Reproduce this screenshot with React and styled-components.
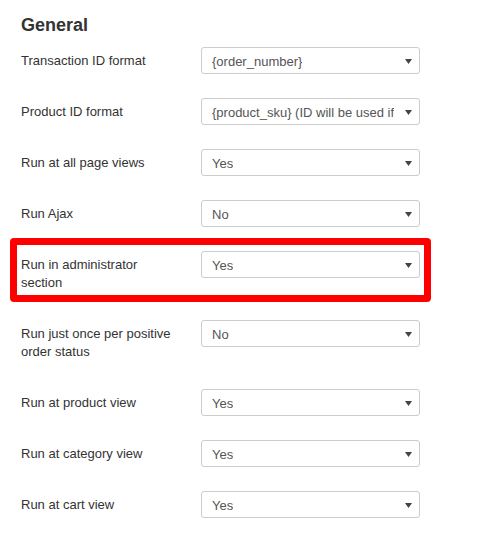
import React from "react";
import styled, { createGlobalStyle } from "styled-components";

const rows = [
  { label: "Transaction ID format", value: "{order_number}" },
  { label: "Product ID format", value: "{product_sku} (ID will be used if" },
  { label: "Run at all page views", value: "Yes" },
  { label: "Run Ajax", value: "No" },
  { label: "Run in administrator section", value: "Yes", marked: true },
  { label: "Run just once per positive order status", value: "No" },
  { label: "Run at product view", value: "Yes" },
  { label: "Run at category view", value: "Yes" },
  { label: "Run at cart view", value: "Yes" },
];

function Caret() {
  return (
    <svg width="7" height="5" viewBox="0 0 7 5">
      <path d="M0 0 L7 0 L3.5 5 Z" fill="#444" />
    </svg>
  );
}

function App() {
  return (
    <>
      <GlobalStyle />
      <Panel>
        <Heading>General</Heading>
        {rows.map((r) => (
          <Row key={r.label} marked={r.marked}>
            <Label>{r.label}</Label>
            <SelectBox>
              <SelectText>{r.value}</SelectText>
              <Arrow>
                <Caret />
              </Arrow>
            </SelectBox>
          </Row>
        ))}
      </Panel>
    </>
  );
}

export default App;

const GlobalStyle = createGlobalStyle`
  body {
    margin: 0;
    background: #fff;
    font-family: "Liberation Sans", Arial, sans-serif;
    color: #333;
  }
`;

const Panel = styled.div`
  width: 399px;
  padding: 15px 0 0 21px;
`;

const Heading = styled.h3`
  font-size: 18px;
  line-height: 20px;
  font-weight: bold;
  color: #333;
  margin: 0 0 12px;
`;

const Row = styled.div`
  position: relative;
  display: flex;
  align-items: flex-start;
  margin-bottom: 24px;

  ${(p) =>
    p.marked &&
    `
    &::after {
      content: "";
      position: absolute;
      top: -13px;
      bottom: -6px;
      left: -11px;
      right: -11px;
      border: 7px solid #ff0000;
      border-radius: 4px;
      pointer-events: none;
    }
  `}
`;

const Label = styled.div`
  width: 160px;
  margin-right: 20px;
  padding: 5px 0 4px;
  font-size: 13px;
  line-height: 18px;
  color: #333;
`;

const SelectBox = styled.div`
  position: relative;
  width: 219px;
  height: 27px;
  box-sizing: border-box;
  border: 1px solid #ccc;
  border-radius: 3px;
  background: #fff;
  display: flex;
  align-items: center;
  padding: 0 22px 0 10px;
`;

const SelectText = styled.span`
  font-size: 13px;
  color: #555;
  white-space: nowrap;
  overflow: hidden;
  padding-top: 1px;
`;

const Arrow = styled.span`
  position: absolute;
  right: 7px;
  top: 11px;
  display: flex;
`;
